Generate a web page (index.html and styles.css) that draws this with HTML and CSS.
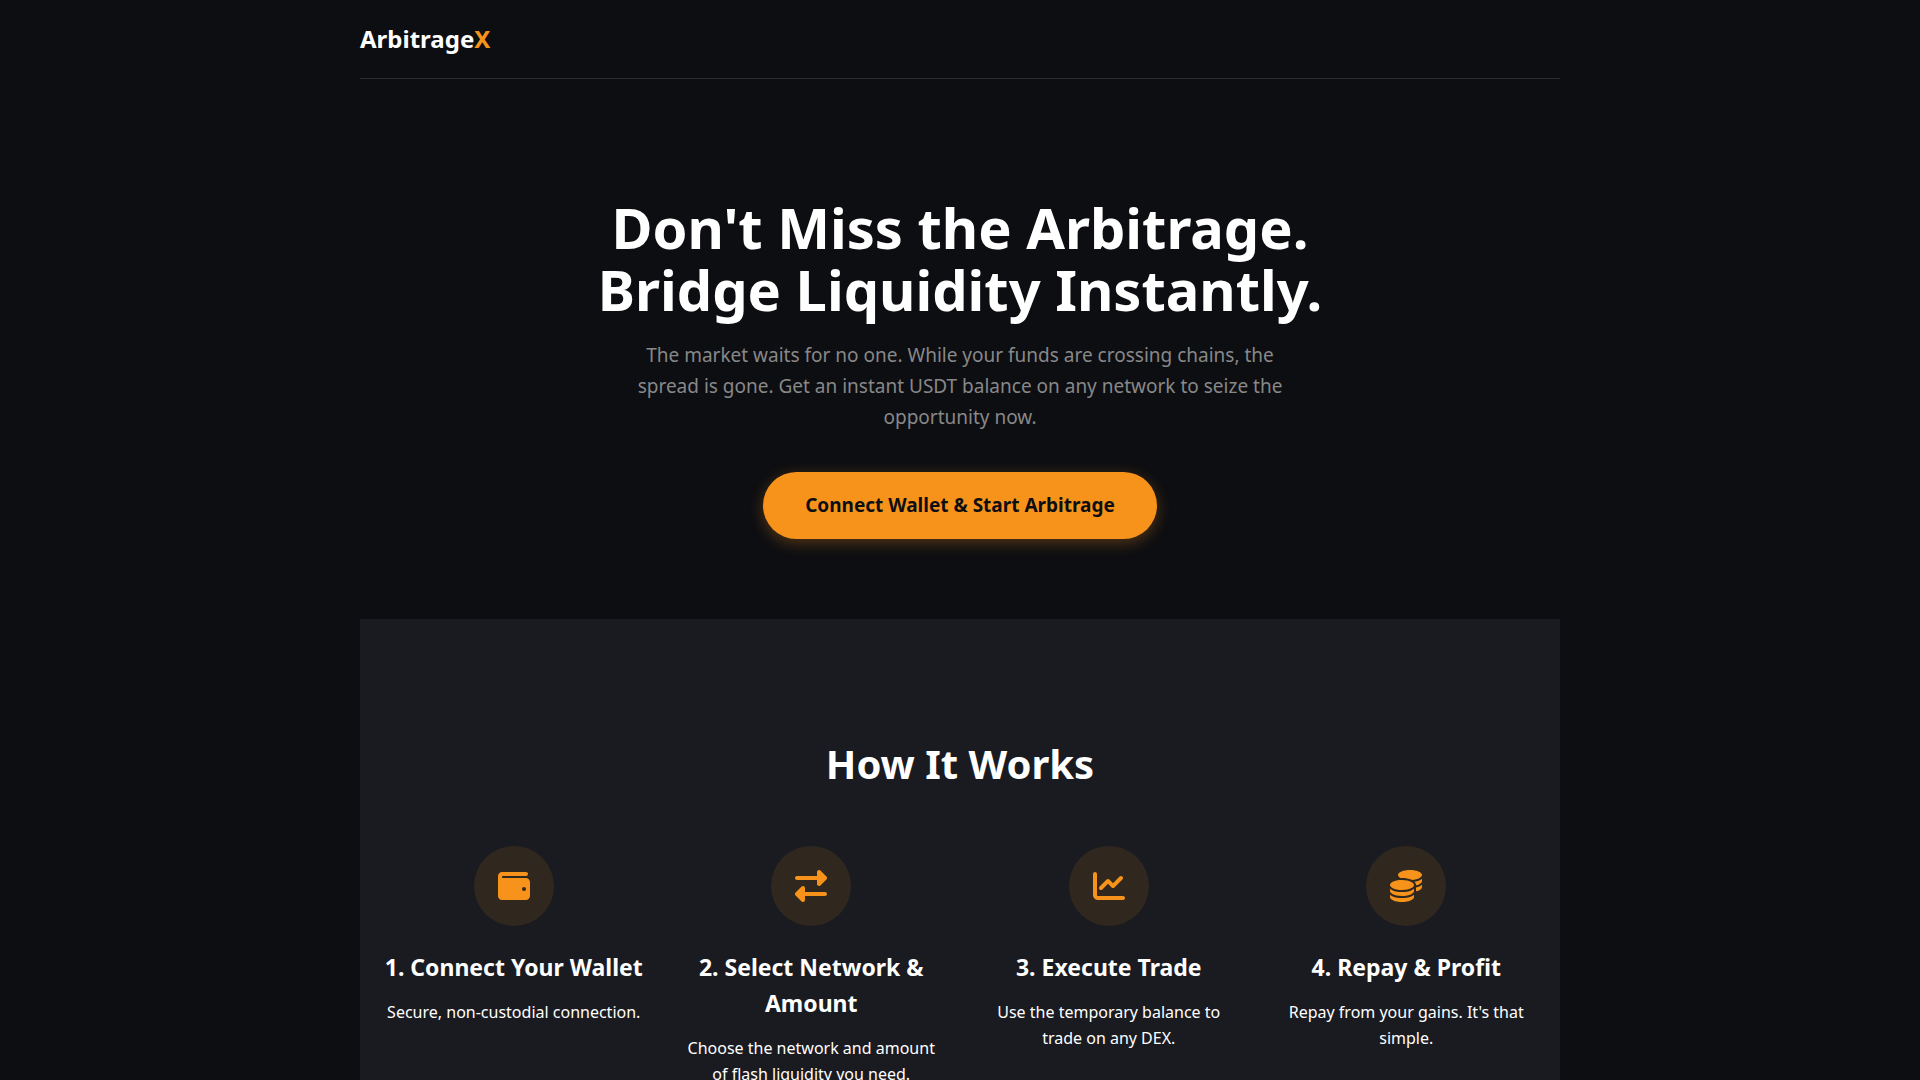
FILE: index.html
```html
<!DOCTYPE html>
<html lang="en">
<head>
    <meta charset="UTF-8">
    <meta name="viewport" content="width=device-width, initial-scale=1.0">
    <title>ArbitrageX</title>
    <link rel="stylesheet" href="styles.css">
</head>
<body>
    <div class="container">
        <header>
            <div class="logo">Arbitrage<span>X</span></div>
        </header>

        <section class="hero">
            <h1>Don't Miss the Arbitrage.<br>Bridge Liquidity Instantly.</h1>
            <p>The market waits for no one. While your funds are crossing chains, the spread is gone. Get an instant USDT balance on any network to seize the opportunity now.</p>
            <button type="button" class="cta-button">Connect Wallet &amp; Start Arbitrage</button>
        </section>

        <section class="how-it-works">
            <h2>How It Works</h2>
            <div class="steps">
                <div class="step">
                    <div class="step-icon">
                        <svg viewBox="0 0 512 512" aria-hidden="true"><path d="M64 32C28.700 32 0 60.700 0 96V416c0 35.300 28.700 64 64 64H448c35.300 0 64-28.700 64-64V192c0-35.300-28.700-64-64-64H80c-8.800 0-16-7.200-16-16s7.200-16 16-16H448c17.700 0 32-14.300 32-32s-14.300-32-32-32H64zM416 272a32 32 0 1 1 0 64 32 32 0 1 1 0-64z"/></svg>
                    </div>
                    <h3>1. Connect Your Wallet</h3>
                    <p>Secure, non-custodial connection.</p>
                </div>
                <div class="step">
                    <div class="step-icon">
                        <svg viewBox="0 0 512 512" aria-hidden="true"><path d="M32 96l320 0V32c0-12.900 7.800-24.600 19.800-29.600s25.700-2.200 34.900 6.900l96 96c6 6 9.400 14.100 9.400 22.600s-3.400 16.600-9.400 22.600l-96 96c-9.200 9.200-22.900 11.900-34.900 6.900s-19.800-16.600-19.800-29.600V160L32 160c-17.700 0-32-14.300-32-32s14.300-32 32-32zM480 352c17.700 0 32 14.300 32 32s-14.300 32-32 32H160v64c0 12.900-7.800 24.600-19.800 29.600s-25.700 2.200-34.900-6.900l-96-96c-6-6-9.400-14.100-9.400-22.600s3.400-16.600 9.400-22.600l96-96c9.200-9.200 22.900-11.900 34.900-6.900s19.800 16.600 19.800 29.600l0 64H480z"/></svg>
                    </div>
                    <h3>2. Select Network &amp; Amount</h3>
                    <p>Choose the network and amount of flash liquidity you need.</p>
                </div>
                <div class="step">
                    <div class="step-icon">
                        <svg viewBox="0 0 512 512" aria-hidden="true"><path d="M64 64c0-17.700-14.300-32-32-32S0 46.300 0 64V400c0 44.200 35.800 80 80 80H480c17.700 0 32-14.300 32-32s-14.300-32-32-32H80c-8.800 0-16-7.200-16-16V64zm406.600 86.600c12.500-12.500 12.500-32.800 0-45.300s-32.800-12.500-45.300 0L320 210.700l-57.400-57.400c-12.500-12.500-32.800-12.500-45.300 0l-112 112c-12.500 12.500-12.500 32.800 0 45.300s32.800 12.500 45.300 0L240 221.300l57.400 57.400c12.500 12.500 32.800 12.500 45.300 0l128-128z"/></svg>
                    </div>
                    <h3>3. Execute Trade</h3>
                    <p>Use the temporary balance to trade on any DEX.</p>
                </div>
                <div class="step">
                    <div class="step-icon">
                        <svg viewBox="0 0 512 512" aria-hidden="true"><path d="M512 80c0 18-14.300 34.600-38.400 48c-29.100 16.100-72.500 27.500-122.300 30.900c-3.700-1.800-7.400-3.500-11.300-5C300.600 137.400 248.200 128 192 128c-8.300 0-16.400 .2-24.500 .6l-1.100-.6C142.300 114.600 128 98 128 80c0-44.200 86-80 192-80S512 35.800 512 80zM160.700 161.100c10.200-.7 20.700-1.100 31.300-1.100c62.200 0 117.400 12.300 152.500 31.400C369.300 204.900 384 221.700 384 240c0 4-.7 7.900-2.100 11.700c-4.600 13.200-17 25.300-35 35.500c-.1 .1-.3 .1-.4 .2c-.3 .2-.6 .3-.9 .5c-35 19.400-90.800 32-153.600 32c-59.600 0-112.900-11.300-148.200-29.100c-1.900-.9-3.700-1.900-5.500-2.900C14.300 274.600 0 258 0 240c0-34.800 53.400-64.500 128-75.400c10.500-1.500 21.400-2.700 32.700-3.500zM416 240c0-21.900-10.600-39.900-24.100-53.400c28.300-4.400 54.200-11.400 76.200-20.500c16.300-6.800 31.500-15.200 43.900-25.500V176c0 19.300-16.500 37.100-43.800 50.900c-14.600 7.400-32.400 13.700-52.400 18.500c.1-1.800 .2-3.500 .2-5.300zm-32 96c0 18-14.300 34.600-38.400 48c-1.800 1-3.600 1.900-5.500 2.900C304.900 404.700 251.600 416 192 416c-62.800 0-118.600-12.600-153.600-32C14.300 370.600 0 354 0 336V300.600c12.500 10.300 27.600 18.700 43.900 25.500C83.400 342.600 135.800 352 192 352s108.600-9.400 148.100-25.900c7.800-3.200 15.300-6.900 22.400-10.900c6.100-3.400 11.800-7.200 17.200-11.200c1.500-1.100 2.900-2.300 4.300-3.400V304v5.700V336zm32 0V304 278.100c19-4.200 36.500-9.500 52.100-16c16.300-6.800 31.500-15.200 43.900-25.500V272c0 10.500-5 21-14.900 30.900c-16.300 16.300-45 29.700-81.300 38.400c.1-1.700 .2-3.500 .2-5.300zM192 448c56.200 0 108.600-9.400 148.100-25.900c16.300-6.800 31.500-15.200 43.900-25.500V432c0 44.200-86 80-192 80S0 476.200 0 432V396.600c12.500 10.300 27.600 18.700 43.900 25.500C83.400 438.600 135.800 448 192 448z"/></svg>
                    </div>
                    <h3>4. Repay &amp; Profit</h3>
                    <p>Repay from your gains. It's that simple.</p>
                </div>
            </div>
        </section>
    </div>
</body>
</html>
```

FILE: styles.css
```css
* {
    margin: 0;
    padding: 0;
    box-sizing: border-box;
}

body {
    font-family: "Noto Sans", sans-serif;
    font-size: 16px;
    line-height: 1.6;
    background-color: #0d0e12;
    color: #fff;
}

.container {
    max-width: 1200px;
    margin: 0 auto;
}

header {
    padding: 20px 0;
    border-bottom: 1px solid #2a2b30;
}

.logo {
    font-size: 24px;
    font-weight: 700;
}

.logo span {
    color: #f7931a;
}

/* Hero */
.hero {
    padding: 117px 0 80px;
    text-align: center;
}

.hero h1 {
    margin-bottom: 20px;
    font-size: 56px;
    line-height: 62px;
}

.hero p {
    max-width: 680px;
    margin: 0 auto 39px;
    font-size: 19px;
    line-height: 31px;
    color: #888;
}

.cta-button {
    padding: 18px 42px;
    border: none;
    border-radius: 50px;
    background-color: #f7931a;
    color: #0d0e12;
    font-family: inherit;
    font-size: 19px;
    font-weight: 700;
    line-height: 31px;
    cursor: pointer;
    box-shadow: 0 4px 15px rgba(247, 147, 26, 0.3);
}

/* How it works */
.how-it-works {
    padding: 113px 20px 120px;
    background-color: #1a1b20;
    text-align: center;
}

.how-it-works h2 {
    margin-bottom: 50px;
    font-size: 40px;
}

.steps {
    display: grid;
    grid-template-columns: repeat(auto-fit, minmax(250px, 1fr));
    gap: 30px;
}

.step {
    padding: 0 4px;
}

.step-icon {
    display: flex;
    align-items: center;
    justify-content: center;
    width: 80px;
    height: 80px;
    margin: 0 auto 23px;
    border-radius: 50%;
    background-color: rgba(247, 147, 26, 0.1);
}

.step-icon svg {
    width: 32px;
    height: 32px;
    fill: #f7931a;
}

.step h3 {
    margin-bottom: 14px;
    font-size: 23px;
    line-height: 36px;
}

.step p {
    font-size: 16px;
    line-height: 26px;
}
```
